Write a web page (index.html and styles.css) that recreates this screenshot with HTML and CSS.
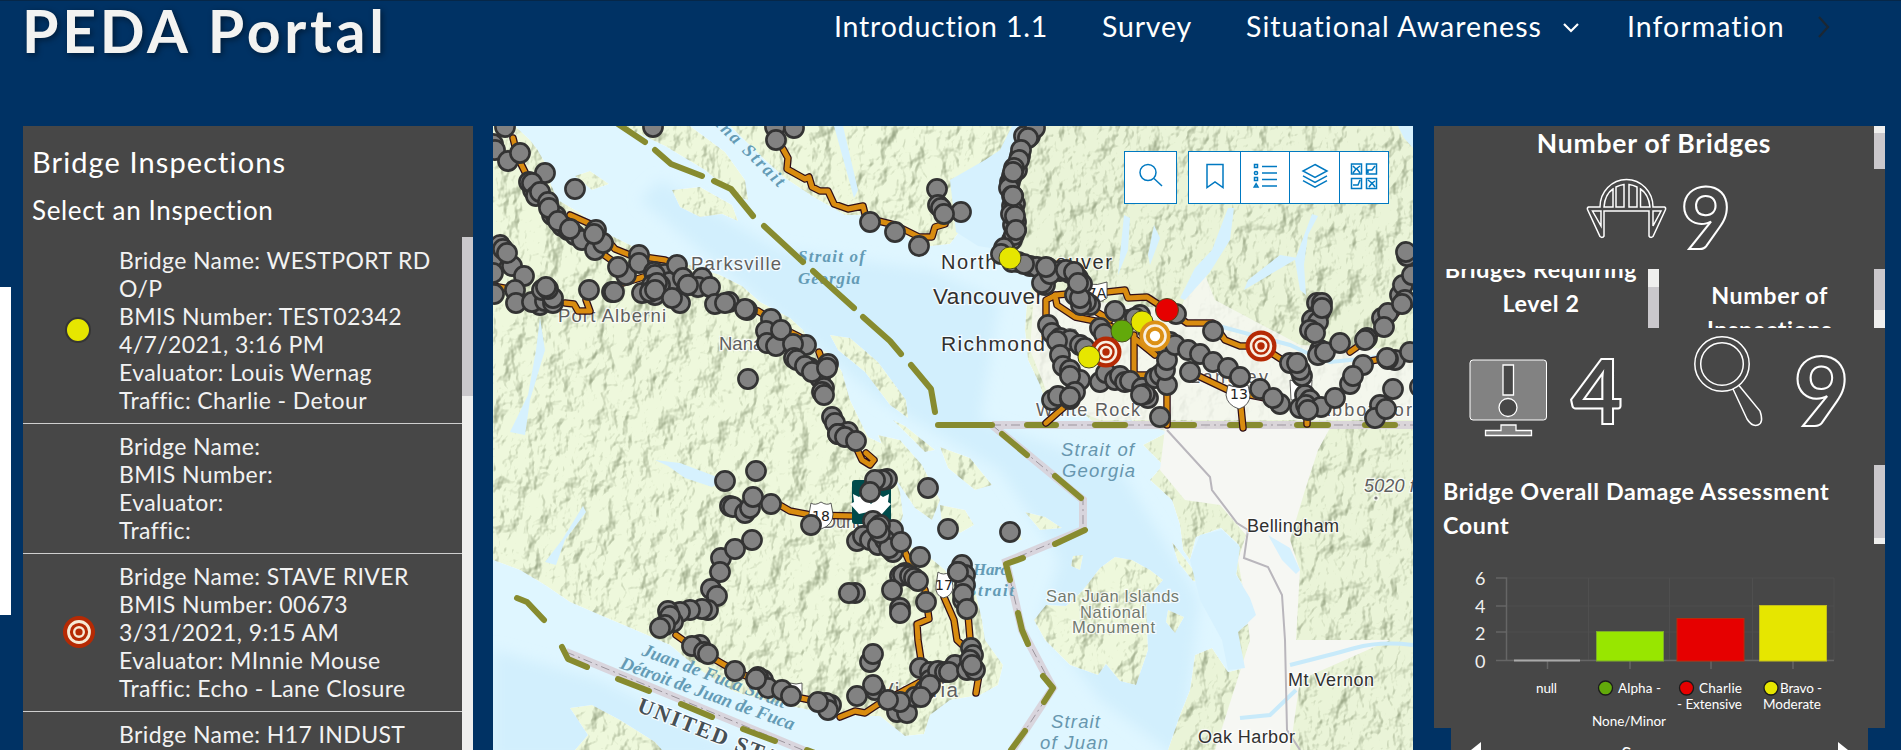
FILE: index.html
```html
<!DOCTYPE html>
<html lang="en">
<head>
<meta charset="utf-8">
<title>PEDA Portal</title>
<link rel="stylesheet" href="styles.css">
</head>
<body>
<div class="page">
  <header class="header">
    <h1 class="brand">PEDA Portal</h1>
    <nav class="nav">
      <a class="nav-intro">Introduction 1.1</a>
      <a class="nav-survey">Survey</a>
      <a class="nav-aware">Situational Awareness</a>
      <svg class="nav-down" width="18" height="12" viewBox="0 0 18 12"><path d="M2 2l7 7 7-7"/></svg>
      <a class="nav-info">Information</a>
      <svg class="nav-next" width="14" height="22" viewBox="0 0 14 22"><path d="M2 1l9 10-9 10"/></svg>
    </nav>
  </header>

  <main class="main">
    <section class="panel list-panel">
      <h2 class="list-title">Bridge Inspections</h2>
      <p class="list-sub">Select an Inspection</p>
      <div class="list-wrap">
        <ul class="list">
          <li class="item">
            <span class="symbol"><svg width="34" height="36" viewBox="0 0 34 36"><circle cx="16" cy="18" r="12" fill="#e6e600" stroke="#353535" stroke-width="2"/></svg></span>
            <p>Bridge Name: WESTPORT RD<br>O/P<br>BMIS Number: TEST02342<br>4/7/2021, 3:16 PM<br>Evaluator: Louis Wernag<br>Traffic: Charlie - Detour</p>
          </li>
          <li class="item">
            <span class="symbol"></span>
            <p>Bridge Name:<br>BMIS Number:<br>Evaluator:<br>Traffic:</p>
          </li>
          <li class="item">
            <span class="symbol"><svg width="34" height="36" viewBox="0 0 34 36"><g fill="none"><circle cx="17" cy="18" r="16" fill="#b52a04"/><circle cx="17" cy="18" r="10.5" stroke="#f6ead5" stroke-width="2.8"/><circle cx="17" cy="18" r="4.8" stroke="#f6ead5" stroke-width="2.4"/></g></svg></span>
            <p>Bridge Name: STAVE RIVER<br>BMIS Number: 00673<br>3/31/2021, 9:15 AM<br>Evaluator: MInnie Mouse<br>Traffic: Echo - Lane Closure</p>
          </li>
          <li class="item">
            <span class="symbol empty"></span>
            <p>Bridge Name: H17 INDUST</p>
          </li>
        </ul>
        <div class="scroll list-scroll"><i></i></div>
      </div>
    </section>

    <section class="map-panel">
      <svg class="map" width="920" height="624" viewBox="493 126 920 624">
        <defs>
          <filter id="relief" x="0" y="0" width="100%" height="100%" color-interpolation-filters="sRGB">
            <feTurbulence type="fractalNoise" baseFrequency="0.045 0.035" numOctaves="4" seed="8" result="n"/>
            <feDiffuseLighting in="n" surfaceScale="8" diffuseConstant="1.2" lighting-color="#ffffff" result="l"><feDistantLight azimuth="215" elevation="58"/></feDiffuseLighting>
            <feColorMatrix in="l" type="matrix" values=".42 0 0 0 .6  0 .39 0 0 .63  0 0 .46 0 .56  0 0 0 1 0" result="s"/>
            <feBlend in="SourceGraphic" in2="s" mode="multiply" result="b"/>
            <feComposite in="b" in2="SourceAlpha" operator="in"/>
          </filter>
          <filter id="soft"><feGaussianBlur stdDeviation="7"/></filter>
          <marker id="dot" markerUnits="userSpaceOnUse" markerWidth="24" markerHeight="24" refX="12" refY="12"><circle cx="12" cy="12" r="9.6" fill="#828282" stroke="#333" stroke-width="2.6"/></marker>
        </defs>

        <rect x="493" y="126" width="920" height="624" fill="#dff6ff"/>
        <path class="deep" filter="url(#soft)" d="M640 200 760 300 880 400 1000 470 1060 560 1040 620 1100 700 1180 760 1200 600 1120 470 980 420 1000 300 930 270 780 250 660 180zM493 650 600 680 760 760H493z"/>

        <g class="land" filter="url(#relief)">
          <path d="M493 126H515L530 140 537 149 547 166 551 185 558 200 580 213 610 235 640 250 680 262 720 275 742 286 760 302 790 318 803 330 812 345 832 355 842 372 850 400 862 425 868 437 885 445 892 470 900 492 903 515 898 532 912 548 928 556 945 570 956 585 975 590 982 620 985 640 1003 665 998 685 980 695 950 700 930 715 924 734 905 736 880 716 850 716 820 712 780 704 735 692 700 670 670 645 640 632 600 615 570 602 545 585 520 570 493 560z"/>
          <path d="M623 126H690L725 152 745 180 748 200 735 196 705 170 665 146z"/>
          <path d="M672 190 700 187 732 205 738 221 722 214 700 217 680 207zM575 176 590 171 609 184 592 190z"/>
          <path d="M730 126 765 160 785 178 812 196 845 215 870 215 895 228 922 247 950 244 962 228 980 200 1008 160 1018 126z"/>
          <path d="M830 335 850 338 878 362 906 400 908 418 890 405 865 372 838 350zM878 435 900 440 922 465 940 500 932 520 915 508 895 478zM940 447 970 458 992 485 975 490 948 468zM940 505 965 510 974 525 960 533 942 525zM1025 512 1045 517 1062 528 1040 530zM1000 524 1015 522 1022 540 1008 540zM893 420 905 426 935 450 925 452z"/>
          <path class="mainland" d="M1022 126H1413V750H1168L1180 715 1190 690 1195 655 1212 648 1228 672 1245 668 1236 632 1256 618 1250 597 1236 574 1239 545 1221 528 1196 537 1190 560 1183 550 1180 525 1172 500 1150 480 1163 465 1143 445 1168 432 1130 420 1095 424 1080 410 1048 410 1040 385 1028 360 1025 330 1027 300 1035 278 1012 268 1000 250 1003 200 1005 165z"/>
          <path d="M1083 590 1100 568 1115 557 1132 560 1150 570 1163 580 1146 600 1148 650 1136 685 1120 681 1106 664 1098 675 1070 665 1045 640 1034 620 1046 605 1066 606zM1172 542 1186 560 1203 583 1193 581 1178 562zM1168 610 1184 617 1175 633 1166 622zM1073 556 1083 555 1080 570 1071 566zM570 708 592 705 620 720 655 742 662 750H575L588 735z"/>
        </g>
        <g class="urban">
          <path d="M1165 428H1330L1318 450 1305 490 1290 540 1300 570 1296 640 1390 640 1300 680 1290 750H1215L1250 640 1245 600 1238 560 1246 535 1220 505 1185 500 1160 470z"/>
          <path opacity=".8" d="M1035 280 1080 300 1180 310 1200 262 1215 300 1300 345 1413 350V420H1100L1050 400 1030 350z"/>
        </g>
        <g class="water">
          <path d="M1222 530 1240 547 1236 575 1250 598 1256 615 1238 632 1245 668 1228 670 1222 640 1200 600 1190 560 1200 535z"/>
          <path d="M950 180 985 160 1000 150 1012 126H1021L1008 165 1003 250 978 246 956 232zM834 126 843 126 858 190 854 198z"/>
          <path d="M1228 208 1234 208 1230 240 1210 272 1185 300 1180 298 1195 268 1212 250zM1312 214 1318 216 1308 235 1304 265 1306 295 1300 290 1295 260zM1280 255 1298 258 1244 290 1248 280zM1398 126H1413V148L1404 138zM1124 215 1130 218 1128 250 1118 275zM1154 225 1160 238 1150 265 1148 255z"/>
          <path d="M655 460 680 463 725 480 712 487 685 478 668 466zM583 506 586 512 565 540 556 565 545 562 562 540zM540 318 545 350 530 400 525 435 510 432 528 395 536 350zM1268 535 1290 548 1300 570 1296 574 1282 560z"/>
          <path class="river" d="M1290 665Q1330 655 1355 648T1413 645M1296 690 1270 715 1240 718M1413 350 1370 358 1330 362 1305 352 1290 345 1215 325"/>
        </g>
        <path class="local-road" d="M1167 430 1210 477 1212 490 1237 523 1248 530 1244 558 1268 567 1282 595 1285 640 1287 730 1300 750"/>

        <g class="border-band"><path d="M992 425H1413M992 425 1083 500V530L1006 562 1022 630 1053 688 1011 752M566 652 810 753"/></g>
        <g class="border-thin"><path d="M992 425H1413M992 425 1083 500V530L1006 562 1022 630 1053 688 1011 752M566 652 810 753"/></g>

        <g class="labels">
          <text x="691" y="270" font-size="18.5" textLength="90">Parksville</text>
          <text x="558" y="322" font-size="18.5" textLength="108">Port Alberni</text>
          <text x="719" y="350" font-size="18.5" textLength="74">Nanaimo</text>
          <text x="823" y="528" font-size="18" textLength="62">Duncan</text>
          <text x="880" y="697" font-size="20.5" textLength="78">Victoria</text>
          <g class="city">
            <text x="941" y="269" font-size="20" textLength="171">North Vancouver</text>
            <text x="933" y="304" font-size="22.5" textLength="110">Vancouver</text>
            <text x="941" y="351" font-size="21" textLength="104">Richmond</text>
            <text x="1247" y="532" font-size="18" textLength="92">Bellingham</text>
            <text x="1288" y="686" font-size="18" textLength="86">Mt  Vernon</text>
            <text x="1198" y="743" font-size="18" textLength="97">Oak Harbor</text>
          </g>
          <text x="1036" y="416" font-size="18" textLength="104">White Rock</text>
          <text x="1190" y="383" font-size="18" textLength="78">Langley</text>
          <text x="1318" y="416" font-size="18" textLength="106">Abbotsford</text>
          <g class="park">
            <text x="1046" y="602" font-size="16.5" textLength="133">San Juan Islands</text>
            <text x="1080" y="618" font-size="16.5" textLength="65">National</text>
            <text x="1072" y="633" font-size="16.5" textLength="83">Monument</text>
          </g>
          <text class="peak" x="1364" y="492" font-size="18" textLength="56">5020 ft</text>
          <circle cx="1376" cy="498" r="1.6" fill="#777"/>
          <g class="sea">
            <text x="1061" y="456" font-size="18.5" textLength="73">Strait of</text>
            <text x="1062" y="477" font-size="18.5" textLength="73">Georgia</text>
            <text x="1051" y="728" font-size="18.5" textLength="49">Strait</text>
            <text x="1040" y="749" font-size="18.5" textLength="68">of Juan</text>
          </g>
          <g class="strait">
            <text x="798" y="262" font-size="17" textLength="67">Strait of</text>
            <text x="798" y="284" font-size="17" textLength="62">Georgia</text>
            <text x="973" y="575" font-size="17" textLength="36">Haro</text>
            <text x="967" y="596" font-size="17" textLength="47">Strait</text>
            <text transform="translate(687 98) rotate(44.5)" x="0" y="0" font-size="18" textLength="128">laspina Strait</text>
            <text transform="translate(641 655) rotate(20.5)" font-size="18.5" textLength="152">Juan de Fuca Strait</text>
            <text transform="translate(619 668) rotate(19.8)" font-size="18.5" textLength="184">Détroit de Juan de Fuca</text>
          </g>
          <text class="country" transform="translate(636 711) rotate(21.5)" font-size="22" textLength="196">UNITED STATES</text>
        </g>

        <g class="border-dash">
          <path d="M618 124 645 142M655 150 671 164 702 176M714 181 731 189 753 216M764 226 803 262M813 271 854 308M863 317 890 341 901 354M911 365 931 389 935 412M938 425H992M1027 425H1056M1095 425H1125M1164 425H1194M1230 425H1260M1297 425H1328M1365 425H1395"/>
          <path d="M1002 434 1027 455M1055 476 1081 498M1085 530 1055 544M1023 558 1006 564 1010 580M1018 613 1022 630 1028 644M1043 676 1053 688 1044 702M1025 731 1011 750M517 598 527 602 544 620M562 647 568 659 587 667M618 679 649 691M681 704 712 717M743 729 775 741M807 750 820 755"/>
        </g>

        <g id="roads">
          <g class="road-edge"><path id="highways" d="M513 138 518 158 525 172M570 215 595 226 615 249 630 255 665 260 677 265M600 252 632 275M620 284 650 275M565 303 574 304 578 311 590 311 586 300M493 286 515 290M758 311 771 319 790 332 806 340M819 352 822 360M783 149 788 158 787 169 805 179 809 177 812 187 820 191 828 191 834 204 848 209 863 206 866 218 895 225 919 237 932 237 935 227 945 224M1046 325 1046 300 1056 295 1090 292 1107 292 1125 290 1128 298 1147 297 1167 310 1187 323 1213 323 1225 340 1240 346 1261 346 1290 365M1055 295 1057 305 1075 317 1100 322 1122 331M1070 295 1085 305 1110 320M1134 335V375H1167V425M1134 338 1155 355M1190 372 1230 391 1275 400M1240 397 1243 428M1072 400 1046 423M1350 352 1384 328 1403 305M1365 362 1387 358M1307 405V424M855 445 862 460 870 465 874 460 866 453M771 500 790 511 811 515 852 516M904 550 910 563 925 590 928 612 929 619 917 624 918 640 921 660M944 597 954 620 957 640 970 652M957 565 965 600 968 615 971 650M676 635 690 645 735 671 791 696 820 702M840 717 855 711 865 713 877 705 920 682M979 675 976 693"/></g>
          <use href="#highways" class="road-fill"/>
        </g>

        <g class="shields">
          <path d="M811 503q4 3 10-1 6 4 10 1l2 11q0 11-12 15-12-4-12-15zM938 572q5 4 12 0l3 14q0 10-10 12-8-3-7-12zM1228 385q10 4 20 0l2 10q0 10-11 14-12-4-13-14zM1088 284q9 2 19-2v16q-10 8-20 0zM1290 380q10 4 22 0l-1 20h-20zM790 683q6 2 12 0v12h-14zM1064 330q5-3 12 0v10h-12z"/>
          <text x="821" y="521" text-anchor="middle">18</text><text x="944" y="590" text-anchor="middle">17</text><text x="1239" y="399" text-anchor="middle">13</text><text x="1097" y="298" text-anchor="middle">7A</text>
        </g>
        <rect x="852" y="480" width="39" height="44" rx="3" fill="#004b4b"/>
        <path fill="#fff" d="M853 494l6 3 3-2 9 9 9-9 3 2 6-3-1 8 3 2-9 10-9-2h-5l-9 2-9-10 4-2z"/>

        <g class="dots">
          <polyline points="493,144 505,127 495,150 508,161 520,153 533,190 529,182 545,173 532,183 536,196 540,192 548,202 552,215 556,216 549,208 562,226 568,230 558,221 575,235 582,240 570,229 595,250 603,243 596,230 594,234"/>
          <polyline points="639,255 626,275 618,267 639,263 654,272 665,274 670,282 655,275 648,292 642,293 652,285 660,285 655,295 650,292 657,283 655,290 680,303 672,298 677,265 683,278 688,285 702,278 698,287 710,287 688,285 715,304 729,302 725,303 747,310 745,309"/>
          <polyline points="771,319 766,331 767,343 776,346 781,330 806,345 793,344 794,358 797,360 810,368 805,366 820,378 828,364 812,372 824,388 827,368 822,392 824,395 832,417 835,423 848,432 838,434"/>
          <polyline points="500,245 493,258 512,266 503,249 507,253 493,273 524,276 515,290 494,294 540,305 516,303 532,302 545,301 553,303 542,290 553,298 548,289 546,287 589,290 612,292 614,292"/>
          <polyline points="575,189 653,127 748,379 775,127 794,128 776,140 870,222 895,232 919,246 937,189 938,205 941,208 961,212 944,214"/>
          <polyline points="1035,122 1030,136 1024,136 1020,156 1017,170 1010,182 1012,176 1013,196 1012,206 1015,204 1014,212 1016,222 1013,225 1016,230 1012,240 1005,250 1008,255 1018,262 1030,266 1037,267 1045,285 1042,283 1048,268 1047,268 1060,271 1070,273 1078,278 1078,290 1075,295 1090,305 1086,302 1081,305"/>
          <polyline points="1035,128 1028,138 1021,150 1019,160 1014,168 1009,188 1012,196 1011,214 1015,216 1014,235 1004,248 1001,254 1012,262 1024,264 1050,274 1066,270 1074,272 1082,284 1080,298 1013,172 1013,196 1016,230 1078,283 1046,267"/>
          <polyline points="1140,315 1128,320 1135,318 1115,311 1148,330 1176,314 1213,331 1100,328 1104,334 1048,325 1052,333 1060,338 1070,340 1080,345 1085,348 1057,341 1060,355 1063,366 1070,370 1080,380 1070,376"/>
          <polyline points="1052,400 1058,396 1070,399 1075,392 1070,397 1100,382 1106,373 1115,380 1120,376 1125,382 1130,381 1142,388 1148,398 1145,394 1141,395 1160,417 1155,378 1160,375 1167,385 1165,370 1170,342 1165,345 1167,360 1175,345 1188,350 1200,354 1213,362 1228,368 1240,377 1190,372"/>
          <polyline points="1260,389 1280,404 1273,398 1300,408 1305,395 1310,400 1306,405 1321,407 1335,398 1308,410 1350,384 1363,365 1353,376 1395,360 1388,359 1387,358 1410,352 1290,363 1302,376 1300,370 1297,363"/>
          <polyline points="1317,303 1322,303 1320,312 1312,320 1318,322 1322,308 1310,330 1320,350 1315,333 1318,355 1325,352 1340,343 1367,338 1365,340 1382,318 1388,313 1384,327 1400,295 1403,285 1405,300 1412,275 1402,304 1407,256 1406,252 1393,389 1380,405 1375,418 1386,409 1420,387"/>
          <polyline points="838,434 845,437 856,441 887,479 882,480 875,480 870,492 928,488 948,529 1010,532 730,506 756,471 725,481 733,507 745,513 750,508 753,497 771,504 811,525"/>
          <polyline points="873,521 893,530 880,525 857,541 863,536 870,540 878,545 885,540 893,552 889,548 901,542 880,533 877,528 920,557 752,540 721,558 735,549 720,572 711,589 717,596 708,610 702,609 690,610 680,612 668,611 673,622 670,616 665,625 660,628"/>
          <polyline points="700,645 692,646 704,652 708,654 735,671 763,680 758,677 768,688 756,679 782,690 791,696 831,705 826,703 828,710 818,702 855,593 849,593 900,576 905,573 903,575 910,576 914,578 918,581 892,590 900,608 900,613 926,602"/>
          <polyline points="870,662 873,654 857,696 875,690 873,685 920,668 930,672 897,712 907,713 915,697 900,702 888,700 925,690 930,680 938,671 930,685 945,672 955,665 949,672 967,670 971,648 973,655 970,660 975,670 972,665 921,697"/>
          <polyline points="962,565 958,572 965,575 965,585 963,600 963,594 967,609 958,572"/>
        </g>

        <g class="ratings">
          <circle cx="1010" cy="258" r="11" fill="#e6e600"/><circle cx="1122" cy="331" r="11" fill="#62a90a"/>
          <circle cx="1142" cy="322" r="11" fill="#e6e600"/><circle cx="1167" cy="310" r="11.5" fill="#e60000"/>
          <g class="target red"><circle cx="1106" cy="352" r="15.5"/><circle class="ring" cx="1106" cy="352" r="10"/><circle class="ring" cx="1106" cy="352" r="5"/></g>
          <circle cx="1089" cy="357" r="11" fill="#e6e600"/>
          <g class="target amber"><circle cx="1155" cy="336" r="15.5"/><circle class="ring" cx="1155" cy="336" r="10.5"/><circle cx="1155" cy="336" r="5.2" class="core"/></g>
          <g class="target red"><circle cx="1261" cy="346" r="15.5"/><circle class="ring" cx="1261" cy="346" r="10"/><circle class="ring" cx="1261" cy="346" r="5"/></g>
        </g>
      </svg>
      <div class="map-tools">
        <div class="tool-group">
          <span class="tool"><svg width="26" height="26" viewBox="0 0 26 26"><circle cx="10" cy="9.5" r="8"/><path d="M16 15.5l8 7.5"/></svg></span>
        </div>
        <div class="tool-group">
          <span class="tool"><svg width="26" height="26" viewBox="0 0 26 26"><path d="M5 1.5h16v23l-8-5.5-8 5.5z"/></svg></span>
          <span class="tool"><svg width="26" height="26" viewBox="0 0 26 26"><path d="M2.5 1.5h3v3h-3zM2.5 14.500h3v3h-3zM2.200 24h3.800l-1.900-3.200zM10 3.500h15M10 10h15M10 16.500h15M10 23h15"/><circle cx="4" cy="10" r="1.600"/></svg></span>
          <span class="tool"><svg width="28" height="26" viewBox="0 0 28 26"><path d="M14 1.500l12 6.500-12 6.500L2 8zM2 12.800l12 6.500 12-6.500M2 17.600l12 6.500 12-6.500"/></svg></span>
          <span class="tool"><svg width="28" height="28" viewBox="0 0 28 28"><path d="M1.500 2h10v10h-10zM16.500 2h10v10h-10zM1.500 16.500h10v10h-10zM16.500 16.500h10v10h-10zM3 4l3 3-3 4M6 7l4-3M7 7l3 4M18 11v-3h4l3-4M3 23h5l2-5M18 18l4 3 3-2M22 21l-3 4M22 21l3 4"/></svg></span>
        </div>
      </div>
    </section>

    <div class="side">
      <section class="panel stats">
        <div class="stat-top">
          <div class="heading-box"><h3 class="big">Number of Bridges</h3><div class="scroll s1"><i></i></div></div>
          <svg class="figure" width="451" height="100" viewBox="1434 169 451 100">
            <g class="line">
              <path d="M1600 207a26 27 0 0 1 53 0h11.500q1.500.5 1 2.500l-12.500 27q-2.500 2-4-.5V211h-45v25q-1.500 2.500-4 .5l-12.500-27q-.5-2 1-2.500z"/>
              <path d="M1604 207q1-13 9-18v18zM1616 207v-20q4-2 8-2.500v22.500zM1629 207v-22.500q4 .5 8 2.500v20zM1640.500 207v-18q8 5 9.500 18zM1592.500 211h8.500v15zM1661 211h-8v15z"/>
            </g>
            <text class="digit" x="1681" y="249" font-size="86">9</text>
          </svg>
        </div>
        <div class="stat-row">
          <div class="stat">
            <div class="heading-box half"><h3 class="up">Bridges Requiring<br>Level 2</h3><div class="scroll s2"><i></i></div></div>
            <svg class="figure" width="225" height="136" viewBox="1434 328 225 136">
              <rect x="1470" y="360" width="76.500" height="60" rx="3" fill="#828282" stroke="#fff"/>
              <g fill="#474747" stroke="#fff" stroke-width="1.300"><path d="M1503 365h10.500v30h-10.500z"/><circle cx="1508" cy="407.500" r="9"/></g>
              <path d="M1501 425h15v5.500h15.500v5h-46v-5h15.500z" fill="#828282" stroke="#fff" stroke-width="1.300"/>
              <text class="digit" x="1571" y="424" font-size="89">4</text>
            </svg>
          </div>
          <div class="stat">
            <div class="heading-box half"><h3 class="down">Number of<br>Inspections</h3><div class="scroll s3"><i></i></div></div>
            <svg class="figure" width="226" height="136" viewBox="1659 328 226 136">
              <g class="line"><circle cx="1722" cy="364" r="27.200"/><circle cx="1722" cy="364" r="21.300"/><path d="M1733 389l14 30q5 8 11 6t2-14l-21-25.500"/></g>
              <text class="digit" x="1794" y="426" font-size="95">9</text>
            </svg>
          </div>
        </div>
        <div class="chart-block">
          <div class="heading-box chart-head"><h3 class="left">Bridge Overall Damage Assessment Count</h3><div class="scroll s4"><i></i></div></div>
          <svg class="figure" width="451" height="184" viewBox="1434 544 451 184">
            <path d="M1506 578H1834M1506 606H1834M1506 632H1834M1506 660H1834M1588.500 578V660M1669.500 578V660M1752.500 578V660M1834 578V660" stroke="#4f4f4f" fill="none"/>
            <path d="M1496 578H1506.500V660M1496 606h10M1496 632h10M1496 660.500h338M1547.500 660v9M1630 660v9M1711 660v9M1793 660v9" stroke="#666" fill="none" stroke-width="1.500"/>
            <path d="M1514 660.500h66" stroke="#aaa" stroke-width="2"/>
            <rect x="1596.500" y="631.500" width="67" height="29.500" fill="#98e600" stroke="#7dab2a"/>
            <rect x="1677" y="618.500" width="67" height="42.500" fill="#e60000" stroke="#b72c0c"/>
            <rect x="1759.500" y="605.500" width="67" height="55.500" fill="#e6e600" stroke="#c2bd1c"/>
            <g class="ticks"><text x="1475" y="585">6</text><text x="1475" y="613">4</text><text x="1475" y="640">2</text><text x="1475" y="668">0</text></g>
            <g class="cats">
              <text x="1536" y="693" textLength="21">null</text>
              <text x="1618" y="693" textLength="43">Alpha -</text><text x="1592" y="726" textLength="74">None/Minor</text>
              <text x="1699" y="693" textLength="43">Charlie</text><text x="1677" y="709" textLength="65">- Extensive</text>
              <text x="1780" y="693" textLength="42">Bravo -</text><text x="1763" y="709" textLength="58">Moderate</text>
            </g>
            <g stroke="#1b1b1b" stroke-width="1.300"><circle cx="1605.500" cy="688" r="7" fill="#62a90a"/><circle cx="1686.500" cy="688" r="7" fill="#e60000"/><circle cx="1771" cy="688" r="7" fill="#e6e600"/></g>
          </svg>
        </div>
      </section>
      <div class="pager"><svg width="10" height="16" viewBox="0 0 10 16"><path d="M10 0v16L0 8z" fill="#fff"/></svg><span>S</span><svg width="10" height="16" viewBox="0 0 10 16"><path d="M0 0v16l10-8z" fill="#fff"/></svg></div>
    </div>
  </main>
  <div class="drawer-tab"></div>
</div>
</body>
</html>
```

FILE: styles.css
```css
* { box-sizing: border-box; margin: 0; padding: 0; }
body { background: #003264; font-family: Lato, sans-serif; color: #fff; overflow: hidden; }
.page { position: relative; width: 1901px; height: 750px; overflow: hidden; display: flex; flex-direction: column; }
.header { height: 126px; flex: none; border-top: 1px solid #062748; display: flex; align-items: flex-start; }
.brand { padding-left: 22px; width: 834px; height: 70px; font-size: 59px; line-height: 60px; font-weight: 700; letter-spacing: 3.700px; color: #f3f3f1; text-shadow: 2px 2px 6px rgba(0,0,0,.45); white-space: nowrap; }
.nav { display: flex; align-items: flex-start; font-size: 28.500px; line-height: 34px; padding-top: 8px; white-space: nowrap; }
.nav path { fill: none; stroke: #fff; stroke-width: 2.200; }
.nav .nav-next path { stroke: #1b2733; }
.nav a { letter-spacing: .8px; }
.nav .nav-aware, .nav .nav-info { letter-spacing: 1.050px; }
.nav-intro { width: 268px; }
.nav-survey { width: 144px; }
.nav-aware { width: 316px; }
.nav-down { margin: 13px 47px 0 0; }
.nav-info { width: 190px; }
.nav-next { margin-top: 7px; }

.main { flex: none; height: 624px; display: flex; padding-left: 23px; }
.panel { background: #474747; }
.list-panel { width: 450px; height: 624px; display: flex; flex-direction: column; }
.list-title { padding: 19px 0 0 9px; height: 53px; font-size: 29px; line-height: 34px; font-weight: 400; letter-spacing: 1.100px; }
.list-sub { padding: 16px 0 0 9px; height: 58px; font-size: 26px; line-height: 30px; letter-spacing: .65px; }
.list-wrap { flex: 1; min-height: 0; display: flex; overflow: hidden; }
.list { list-style: none; width: 439px; padding-top: 1px; color: #f2f2f2; }
.item { display: flex; align-items: center; padding: 8px 0 9px; border-bottom: 1px solid #cfcfcf; font-size: 23px; line-height: 28px; letter-spacing: .4px; white-space: nowrap; }
.symbol { width: 96px; padding-left: 39px; height: 36px; }
.symbol.empty { height: 0; }
.scroll { width: 11px; background: #efefee; flex: none; display: flex; flex-direction: column; }
.scroll i { background: #cac8cc; }
.list-scroll i { height: 159px; }

.map-panel { position: relative; width: 920px; margin-left: 20px; height: 624px; overflow: hidden; }
.map { display: block; }
.deep { fill: #d2effd; }
.land { fill: #eef8dc; }
.mainland { fill: #eaf4d8; }
.urban path { fill: #f6f7f3; }
.water path { fill: #d6f1fe; }
.water .river { fill: none; stroke: #c8eafa; stroke-width: 4; }
.local-road { fill: none; stroke: #b9b6bc; stroke-width: 2; }
.border-band { fill: none; stroke: #d8d2d9; stroke-width: 8; opacity: .9; }
.border-thin { fill: none; stroke: #9b959d; stroke-width: 1; stroke-dasharray: 9 4 2 4; }
.border-dash { fill: none; stroke: #878b2f; stroke-width: 6; stroke-linecap: round; stroke-linejoin: round; }
.road-edge { fill: none; stroke: #2e0f18; stroke-width: 7.500; stroke-linecap: round; stroke-linejoin: round; }
.road-fill { stroke: #d98c10; fill: none; stroke-width: 5; stroke-linecap: round; stroke-linejoin: round; }
#highways { fill: none; }
.labels { font-family: "Liberation Sans", Arial, sans-serif; fill: #5f5f5f; paint-order: stroke; stroke: #fff; stroke-width: 2.500; stroke-opacity: .75; }
.city { fill: #303030; }
.park { fill: #727a70; }
.peak { font-style: italic; }
.sea { font-style: italic; fill: #6796ae; stroke: none; }
.strait { font-family: "Liberation Serif", serif; font-style: italic; font-weight: 700; fill: #649bb5; stroke: none; }
.country { font-family: "Liberation Serif", serif; font-weight: 700; fill: #454f55; }
.shields path { fill: #fff; stroke: #333; stroke-width: .8; }
.shields text { font: 14px "DejaVu Sans", sans-serif; fill: #222; }
.dots polyline { fill: none; stroke: none; marker-start: url(#dot); marker-mid: url(#dot); marker-end: url(#dot); }
.ratings > circle { stroke: #4b4b20; stroke-width: 1; }
.target.red { fill: #b52a04; }
.target.amber { fill: #dc9116; }
.target .ring { fill: none; stroke: #f8efe0; stroke-width: 2.600; }
.target .core { fill: #fff; }
.map-tools { position: absolute; left: 631px; top: 25px; display: flex; gap: 11px; }
.tool-group { display: flex; background: #fff; border: 1px solid #0079c1; height: 53px; }
.tool { width: 51px; height: 51px; display: flex; align-items: center; justify-content: center; padding-bottom: 3px; }
.tool + .tool { border-left: 1px solid #0079c1; width: 49.400px; }
.tool svg { fill: none; stroke: #0079c1; stroke-width: 1.500; }

.side { width: 451px; margin-left: 21px; display: flex; flex-direction: column; align-items: center; }
.stats { width: 451px; height: 602px; flex: none; }
.figure { display: block; }
.line { fill: none; stroke: #fff; stroke-width: 1.500; }
.digit { font-weight: 900; fill: none; stroke: #fff; stroke-width: 2; }
.heading-box { display: flex; overflow: hidden; }
.heading-box h3 { flex: 1; text-align: center; font-weight: 700; font-size: 23.300px; line-height: 34px; letter-spacing: .6px; white-space: nowrap; }
.stat-top { height: 143px; }
.stat-top .heading-box { height: 43px; }
.heading-box h3.big { font-size: 26.500px; letter-spacing: .8px; }
.stat-row { display: flex; }
.stat { width: 225px; }
.stat + .stat { width: 226px; }
.half { height: 59px; }
.heading-box h3.up { margin-top: -17px; }
.heading-box h3.down { margin-top: 9px; padding-left: 6px; }
.chart-block { margin-top: 1px; }
.chart-head { height: 79px; }
.heading-box h3.left { text-align: left; white-space: normal; padding: 9px 30px 0 9px; }
.s1 { justify-content: flex-end; } .s1 i { height: 36px; }
.s2 { justify-content: flex-end; } .s2 i { height: 41px; }
.s3 i { height: 41px; }
.s4 i { height: 73px; }
.ticks { font-size: 18px; fill: #f0f0f0; }
.cats { font-size: 13.500px; fill: #fff; }
.pager { width: 417px; height: 22px; overflow: hidden; background: #474747; display: flex; justify-content: space-between; padding: 14px 20px 0; font-size: 19px; line-height: 23px; }
.pager span { margin-right: 66px; }
.drawer-tab { position: absolute; left: 0; top: 287px; width: 11px; height: 328px; background: #fff; }
```
